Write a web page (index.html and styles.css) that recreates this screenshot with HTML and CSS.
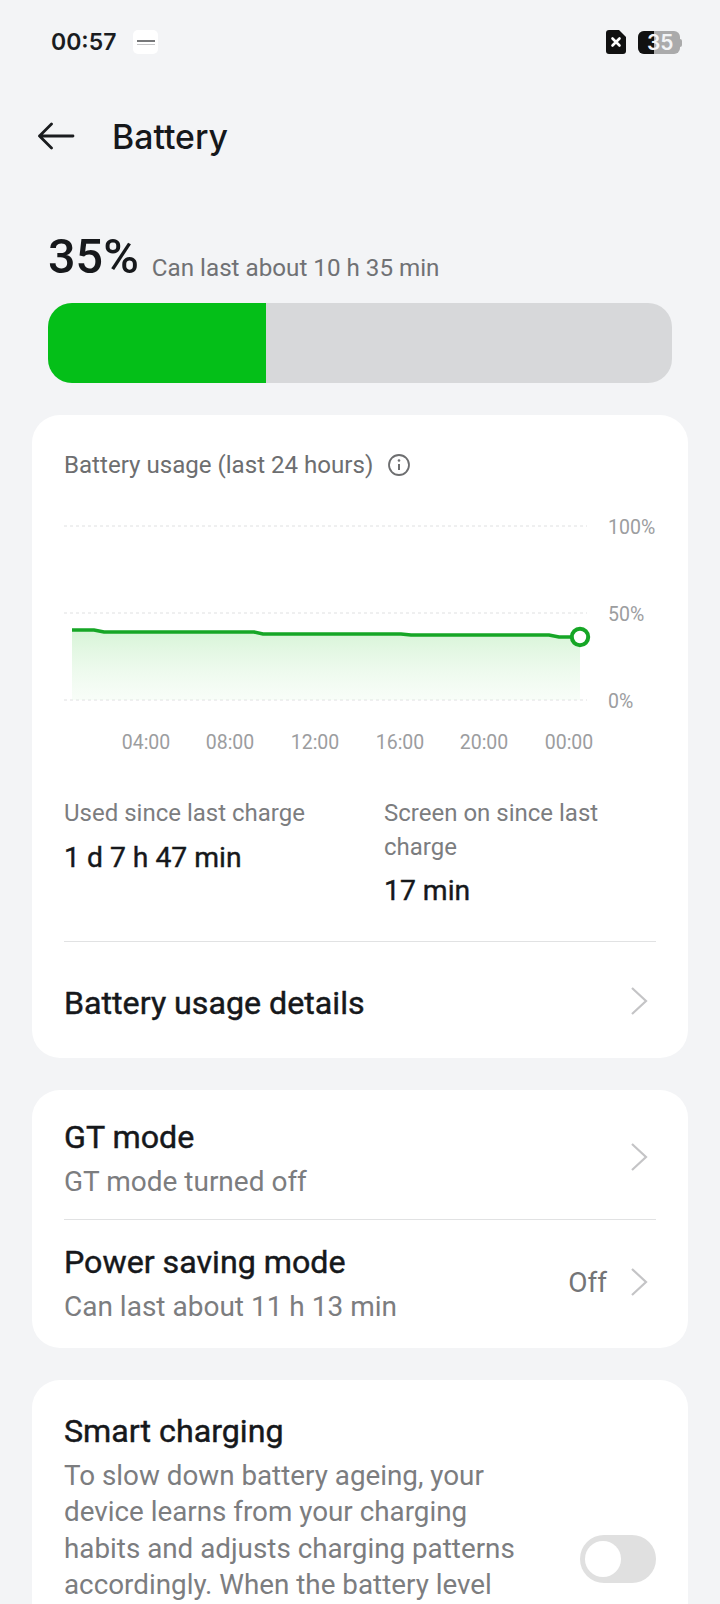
FILE: index.html
```html
<!DOCTYPE html>
<html lang="en">
<head>
  <meta charset="UTF-8">
  <meta name="viewport" content="width=device-width, initial-scale=1.0">
  <title>Battery</title>
  <link rel="stylesheet" href="styles.css">
</head>
<body>

<div class="status-bar">
  <span class="status-time">00:57</span>
  <div class="notif-icon"><span class="notif-logo"></span><span class="notif-sub"></span></div>
  <div class="status-right">
    <svg class="sim-icon" width="20" height="24" viewBox="0 0 20 24">
      <path d="M3 0h10l7 7v14a3 3 0 0 1-3 3H3a3 3 0 0 1-3-3V3a3 3 0 0 1 3-3z" fill="#111"/>
      <path d="M6.500 8.500l7 7M13.500 8.500l-7 7" stroke="#fff" stroke-width="2.600" stroke-linecap="round"/>
    </svg>
    <div class="batt-icon">
      <div class="batt-fill"></div>
      <span class="batt-num">35</span>
      <div class="batt-tip"></div>
    </div>
  </div>
</div>

<div class="app-bar">
  <svg class="back-icon" width="38" height="28" viewBox="0 0 38 28">
    <path d="M35 14H1.500M13.500 2L1.500 14l12 12" fill="none" stroke="#1a1c1f" stroke-width="2.800" stroke-linecap="round" stroke-linejoin="round"/>
  </svg>
  <h1 class="app-title">Battery</h1>
</div>

<div class="level">
  <div class="level-text">
    <span class="level-num">35%</span>
    <span class="level-note">Can last about 10 h 35 min</span>
  </div>
  <div class="level-bar"><div class="level-bar-fill"></div></div>
</div>

<!-- usage card -->
<div class="card usage-card">
  <div class="usage-head">
    <span>Battery usage (last 24 hours)</span>
    <svg width="24" height="24" viewBox="0 0 24 24">
      <circle cx="12" cy="12" r="10" fill="none" stroke="#6d6e70" stroke-width="1.800"/>
      <path d="M12 11v6" stroke="#6d6e70" stroke-width="2"/>
      <circle cx="12" cy="7.500" r="1.300" fill="#6d6e70"/>
    </svg>
  </div>
  <svg class="chart" width="656" height="266" viewBox="0 0 656 266">
    <defs>
      <linearGradient id="areaFill" x1="0" y1="0" x2="0" y2="1">
        <stop offset="0" stop-color="#c9f0c9" stop-opacity="0.75"/>
        <stop offset="1" stop-color="#e4f8e4" stop-opacity="0.25"/>
      </linearGradient>
    </defs>
    <g class="chart-grid">
      <path d="M32 36H555"/>
      <path d="M32 123H555"/>
      <path d="M32 210H555"/>
    </g>
    <path d="M40 140H62L72 142H222L231 144H369L379 145H517L527 147H548V210H40z" fill="url(#areaFill)"/>
    <path d="M40 140H62L72 142H222L231 144H369L379 145H517L527 147H548" fill="none" stroke="#16a626" stroke-width="3.600"/>
    <circle cx="548" cy="147" r="8.200" fill="#fff" stroke="#16a626" stroke-width="4"/>
    <g class="chart-label">
      <text x="576" y="44">100%</text>
      <text x="576" y="131">50%</text>
      <text x="576" y="218">0%</text>
    </g>
    <g class="chart-label chart-time">
      <text x="114" y="259">04:00</text>
      <text x="198" y="259">08:00</text>
      <text x="283" y="259">12:00</text>
      <text x="368" y="259">16:00</text>
      <text x="452" y="259">20:00</text>
      <text x="537" y="259">00:00</text>
    </g>
  </svg>
  <div class="stats">
    <div class="stat">
      <div class="stat-label">Used since last charge</div>
      <div class="stat-value">1 d 7 h 47 min</div>
    </div>
    <div class="stat">
      <div class="stat-label">Screen on since last charge</div>
      <div class="stat-value">17 min</div>
    </div>
  </div>
  <div class="row details-row">
    <div class="row-text"><div class="row-title">Battery usage details</div></div>
    <svg class="chevron" width="20" height="30" viewBox="0 0 20 30"><path d="M3 2l14 13L3 28" fill="none" stroke="#c4c4c6" stroke-width="2.200"/></svg>
  </div>
</div>

<div class="card modes-card">
  <div class="row mode-row">
    <div class="row-text">
      <div class="row-title">GT mode</div>
      <div class="row-sub">GT mode turned off</div>
    </div>
    <svg class="chevron" width="20" height="30" viewBox="0 0 20 30"><path d="M3 2l14 13L3 28" fill="none" stroke="#c4c4c6" stroke-width="2.200"/></svg>
  </div>
  <div class="row mode-row mode-row-last">
    <div class="row-text">
      <div class="row-title">Power saving mode</div>
      <div class="row-sub">Can last about 11 h 13 min</div>
    </div>
    <span class="row-value">Off</span>
    <svg class="chevron" width="20" height="30" viewBox="0 0 20 30"><path d="M3 2l14 13L3 28" fill="none" stroke="#c4c4c6" stroke-width="2.200"/></svg>
  </div>
</div>

<div class="card smart-card">
  <div class="smart-text">
    <div class="row-title">Smart charging</div>
    <div class="smart-desc">To slow down battery ageing, your device learns from your charging habits and adjusts charging patterns accordingly. When the battery level</div>
  </div>
  <div class="toggle"><div class="toggle-knob"></div></div>
</div>

</body>
</html>
```

FILE: styles.css
```css
html, body {
  margin: 0;
  height: 1604px;
  overflow: hidden;
}
body {
  font-family: Roboto, "Noto Sans", sans-serif;
  background-color: #f3f4f6;
  color: #16181b;
}

/* status bar */
.status-bar {
  display: flex;
  align-items: center;
  height: 24px;
  padding: 30px 40px 0 51px;
}
.status-time {
  font-family: Inter, sans-serif;
  font-size: 23px;
  font-weight: 600;
  color: #1a1c1f;
}
.notif-icon {
  width: 25px;
  height: 24px;
  margin-left: 17px;
  border-radius: 5px;
  background: #fff;
  display: flex;
  flex-direction: column;
  align-items: center;
  justify-content: center;
  gap: 2px;
}
.notif-logo {
  width: 18px;
  height: 2px;
  background: #77787a;
}
.notif-sub {
  width: 18px;
  height: 1px;
  background: #c4c4c6;
}
.status-right {
  margin-left: auto;
  display: flex;
  align-items: center;
  gap: 12px;
}
.sim-icon {
  display: block;
}
.batt-icon {
  position: relative;
  width: 42px;
  height: 23px;
  border-radius: 6px;
  background: #aaaaab;
}
.batt-fill {
  width: 16px;
  height: 23px;
  border-radius: 6px 0 0 6px;
  background: #111;
}
.batt-tip {
  position: absolute;
  right: -2px;
  top: 8px;
  width: 2px;
  height: 8px;
  border-radius: 0 2px 2px 0;
  background: #aaaaab;
}
.batt-num {
  position: absolute;
  left: 9px;
  top: -1px;
  font-family: Inter, sans-serif;
  font-size: 21px;
  font-weight: 600;
  line-height: 25px;
  color: #f3f4f6;
}

/* top bar */
.app-bar {
  display: flex;
  align-items: center;
  margin-top: 52px;
  padding-left: 38px;
  height: 60px;
}
.app-title {
  margin: 0 0 0 36px;
  font-family: Inter, sans-serif;
  font-size: 33.800px;
  font-weight: 500;
  color: #16181b;
}

/* battery level */
.level {
  margin-top: 61px;
  padding: 0 48px;
}
.level-text {
  display: flex;
  align-items: flex-end;
  gap: 13px;
  height: 76px;
}
.level-num {
  margin-bottom: 18px;
  font-size: 48.500px;
  font-weight: 500;
  line-height: 56px;
}
.level-note {
  margin-bottom: 18px;
  font-size: 24.200px;
  line-height: 34px;
  color: #707174;
}
.level-bar {
  height: 80px;
  border-radius: 24px;
  background: #d7d8da;
  overflow: hidden;
}
.level-bar-fill {
  width: 218px;
  height: 100%;
  background: #04bf18;
}

/* cards */
.card {
  margin: 32px 32px 0;
  border-radius: 28px;
  background: #fff;
}
.usage-card {
  padding-top: 33px;
}
.usage-head {
  display: flex;
  align-items: center;
  gap: 14px;
  padding: 0 32px;
  height: 34px;
  font-size: 24.100px;
  color: #6d6e70;
}
.chart {
  display: block;
  margin-top: 8px;
}
.chart-grid path {
  stroke: #dfe0e1;
  stroke-width: 1;
  stroke-dasharray: 3 3;
}
.chart-label text {
  font-size: 19.500px;
  fill: #9c9d9f;
}
.chart-time text {
  text-anchor: middle;
}
.stats {
  display: flex;
  margin-top: 41px;
  padding: 0 32px;
}
.stat {
  width: 320px;
  padding-bottom: 33px;
}
.stat + .stat {
  width: 270px;
}
.stat-label {
  font-size: 24px;
  line-height: 33.500px;
  color: #7c7d7f;
}
.stat-value {
  margin-top: 10px;
  font-size: 28.300px;
  -webkit-text-stroke: 0.4px #16181b;
  line-height: 34px;
  color: #16181b;
}
.row {
  display: flex;
  align-items: center;
  margin: 0 32px;
}
.row-text {
  flex: 1;
}
.row-title {
  font-size: 32.200px;
  -webkit-text-stroke: 0.45px #16181b;
  line-height: 40px;
  color: #16181b;
}
.row-sub {
  margin-top: 5px;
  font-size: 28px;
  line-height: 40px;
  color: #7c7d7f;
}
.row-value {
  margin-right: 22px;
  margin-bottom: 4px;
  font-size: 28px;
  color: #747577;
}
.chevron {
  display: block;
  margin: 0 7px 5px 0;
}
.details-row {
  box-sizing: border-box;
  height: 117px;
  padding-top: 6px;
  border-top: 1px solid #e1e2e3;
}
.mode-row {
  box-sizing: border-box;
  height: 130px;
  padding-top: 10px;
  border-bottom: 1px solid #e1e2e3;
}
.mode-row-last {
  height: 128px;
  padding-top: 0;
  border-bottom: 0;
}

.smart-card {
  display: flex;
  align-items: flex-start;
  justify-content: space-between;
  height: 193px;
  padding: 31px 32px 0;
  border-radius: 28px 28px 0 0;
  overflow: hidden;
}
.smart-text {
  width: 460px;
}
.smart-desc {
  margin-top: 7px;
  font-size: 27.800px;
  line-height: 36.300px;
  color: #7c7d7f;
}
.toggle {
  position: relative;
  flex-shrink: 0;
  width: 76px;
  height: 48px;
  margin-top: 124px;
  border-radius: 24px;
  background: #e0e0e0;
}
.toggle-knob {
  position: absolute;
  left: 5px;
  top: 6px;
  width: 36px;
  height: 36px;
  border-radius: 50%;
  background: #fff;
}
```
